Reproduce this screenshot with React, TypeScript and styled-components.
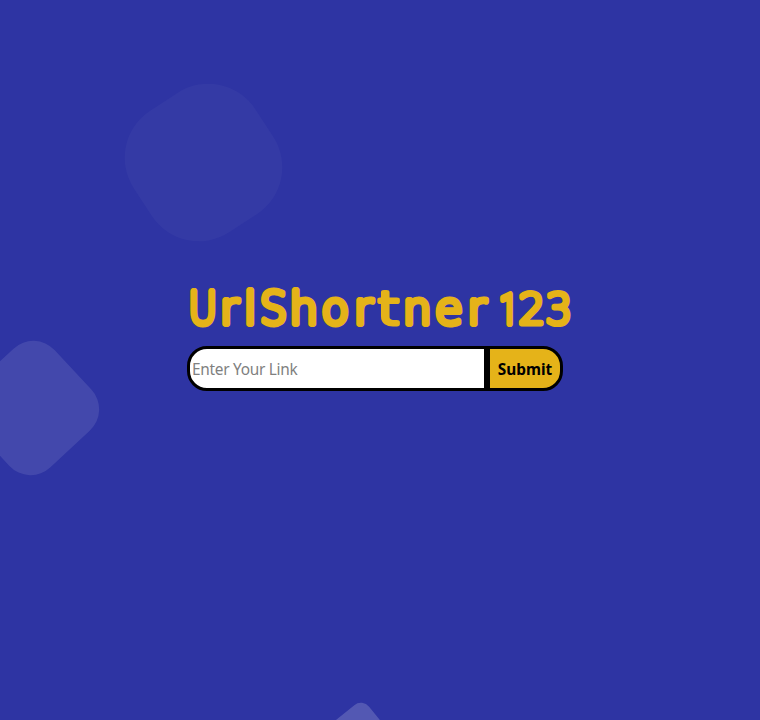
import React from "react";
import styled, { createGlobalStyle } from "styled-components";

const GlobalStyle = createGlobalStyle`
  * { box-sizing: border-box; }
  body { margin: 0; background: #2e34a3; }
`;

const Page = styled.main`
  position: relative;
  height: 100vh;
  overflow: hidden;
  background: #2e34a3;
  padding: 276px 0 0 187px;
  font-family: "Noto Sans", "Open Sans", sans-serif;
`;

const FloatingShape = styled.span<{
  $x: number;
  $y: number;
  $size: number;
  $radius: number;
  $angle: number;
  $alpha: number;
}>`
  position: absolute;
  left: ${(p) => p.$x - p.$size / 2}px;
  top: ${(p) => p.$y - p.$size / 2}px;
  width: ${(p) => p.$size}px;
  height: ${(p) => p.$size}px;
  border-radius: ${(p) => p.$radius}px;
  background: rgba(255, 255, 255, ${(p) => p.$alpha});
  transform: rotate(${(p) => p.$angle}deg);
`;

const Content = styled.section`
  position: relative;
  width: 400px;
`;

const Title = styled.h1`
  margin: 0;
  height: 70px;
`;

const Wordmark = styled.svg`
  display: block;
  overflow: visible;
  font: 200 45px "DejaVu Sans", sans-serif;
  fill: #e5b319;
  stroke: #e5b319;
  stroke-width: 6px;
  stroke-linejoin: round;
  stroke-linecap: round;
`;

const Crossed = styled.tspan`
  stroke-width: 4.8px;
`;

const Digit = styled.tspan`
  font-size: 42px;
  stroke-width: 5.2px;
`;

const One = styled.tspan`
  font-family: Roboto, sans-serif;
  font-weight: 300;
  font-size: 42px;
  stroke-width: 6px;
`;

const Form = styled.form`
  display: flex;
  height: 45px;
`;

const LinkInput = styled.input`
  width: 300px;
  padding: 2px 2px 1px;
  border: 3px solid #000;
  border-radius: 20px 0 0 20px;
  background: #fff;
  outline: 0;
  font: 400 15.4px "Noto Sans", sans-serif;
  letter-spacing: -0.28px;
  color: #111;
  &::placeholder { color: #808080; opacity: 1; }
`;

const SubmitButton = styled.button`
  width: 76px;
  padding: 3px 0 1px;
  border: 3px solid #000;
  border-radius: 0 20px 20px 0;
  background: #e5b319;
  font: 700 15.4px "Noto Sans", sans-serif;
  color: #000;
`;

export default function App() {
  return (
    <>
      <GlobalStyle />
      <Page>
        <FloatingShape $x={203} $y={162.3} $size={145} $radius={56} $angle={-33} $alpha={0.032} />
        <FloatingShape $x={32} $y={408} $size={112} $radius={29} $angle={-43} $alpha={0.1} />
        <FloatingShape $x={356.6} $y={755} $size={81} $radius={10.5} $angle={-39} $alpha={0.18} />
        <Content>
          <Title>
            <Wordmark width="390" height="70">
              <text y="47.8">
                <tspan x="1.5" textLength="28.5" lengthAdjust="spacingAndGlyphs">U</tspan>
                <tspan x="33 57">rl</tspan>
                <tspan x="73" textLength="27" lengthAdjust="spacingAndGlyphs">S</tspan>
                <tspan x="102.5 134.5 167">hor</tspan>
                <Crossed x="190.5" textLength="22" lengthAdjust="spacingAndGlyphs">t</Crossed>
                <tspan x="216 248 280.5">ner</tspan>
                <tspan> </tspan>
                <One x="312.5" textLength="18" lengthAdjust="spacingAndGlyphs">1</One>
                <Digit x="331.5 358.5">23</Digit>
              </text>
            </Wordmark>
          </Title>
          <Form onSubmit={(e) => e.preventDefault()}>
            <LinkInput type="text" placeholder="Enter Your Link" />
            <SubmitButton type="submit">Submit</SubmitButton>
          </Form>
        </Content>
      </Page>
    </>
  );
}
